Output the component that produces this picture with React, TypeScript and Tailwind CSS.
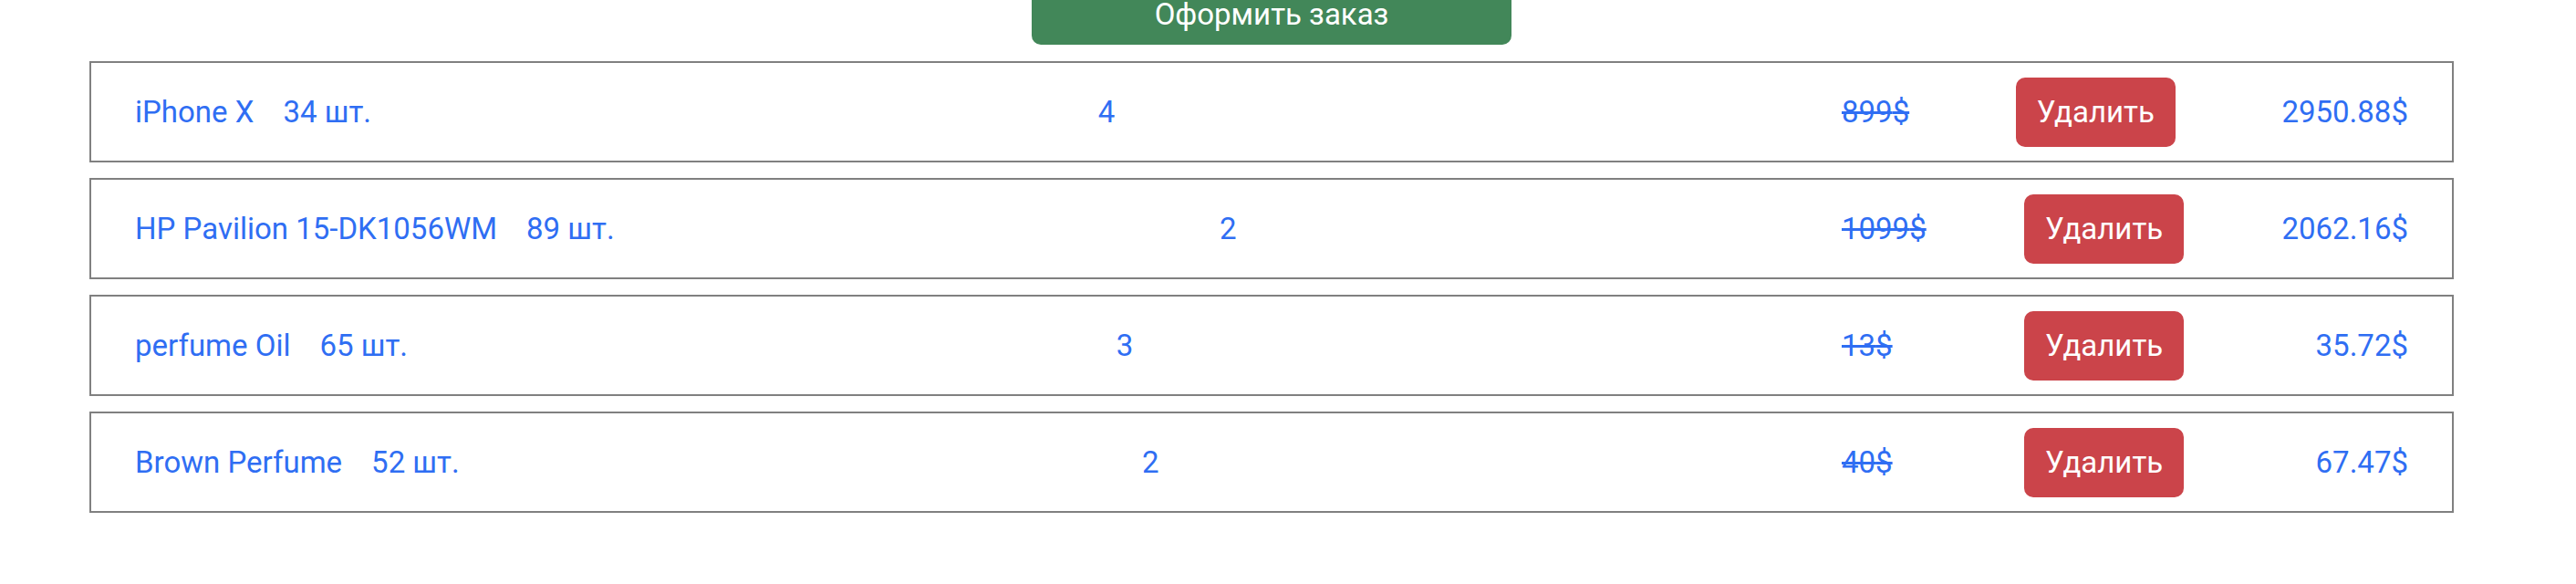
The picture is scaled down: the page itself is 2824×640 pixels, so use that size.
import React from 'react';

interface CartItem {
  id: number;
  name: string;
  stock: number;
  count: number;
  price: number;
  total: string;
}

const items: CartItem[] = [
  { id: 1, name: 'iPhone X', stock: 34, count: 4, price: 899, total: '2950.88' },
  { id: 2, name: 'HP Pavilion 15-DK1056WM', stock: 89, count: 2, price: 1099, total: '2062.16' },
  { id: 3, name: 'perfume Oil', stock: 65, count: 3, price: 13, total: '35.72' },
  { id: 4, name: 'Brown Perfume', stock: 52, count: 2, price: 40, total: '67.47' },
];

const CartRow: React.FC<{ item: CartItem }> = ({ item }) => (
  <div className="flex items-center justify-between h-[111px] mb-[17px] border-2 border-[#808080] px-[48px] text-[33px] leading-[48px] text-[#2f6ef3]">
    <div className="flex items-center">
      <span>{item.name}</span>
      <span className="ml-[32px]">{item.stock} шт.</span>
    </div>
    <span>{item.count}</span>
    <div className="w-[621px] flex items-center justify-between">
      <span className="line-through decoration-[3px]">{item.price}$</span>
      <button className="h-[76px] px-[23px] rounded-[10px] bg-[#cb444a] text-white">
        Удалить
      </button>
      <span>{item.total}$</span>
    </div>
  </div>
);

export default function App() {
  return (
    <div className="w-[2824px] h-[640px] bg-white overflow-hidden" style={{ fontFamily: 'Roboto, "Noto Sans", sans-serif' }}>
      <div className="ml-[98px] w-[2592px]">
        <div className="flex justify-center -mt-[18px] mb-[18px]">
          <button className="w-[526px] h-[67px] rounded-[10px] bg-[#428759] text-white text-[33px] leading-[48px]">
            Оформить заказ
          </button>
        </div>
        {items.map(item => (
          <CartRow key={item.id} item={item} />
        ))}
      </div>
    </div>
  );
}
